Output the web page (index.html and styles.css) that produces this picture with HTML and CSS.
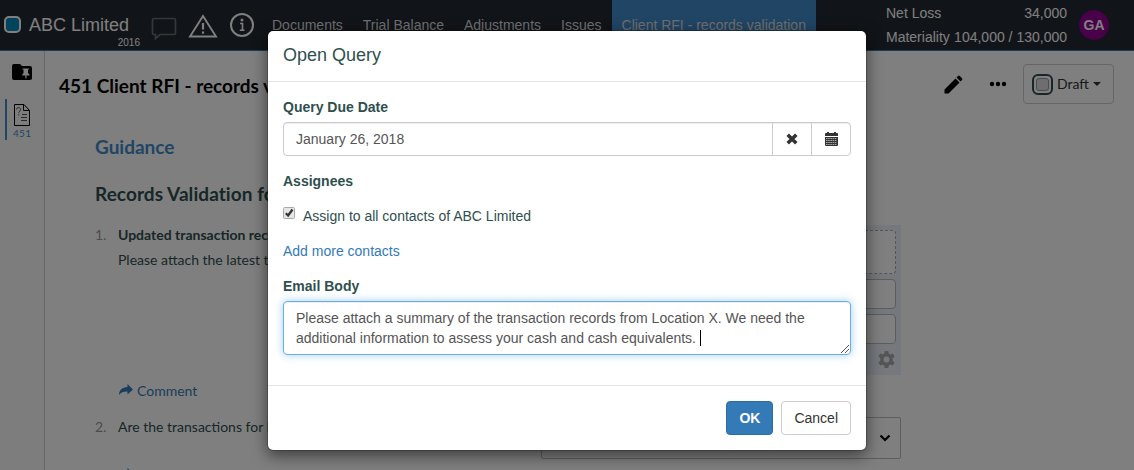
FILE: index.html
```html
<!DOCTYPE html>
<html lang="en">
<head>
<meta charset="utf-8">
<title>Client RFI - records validation</title>
<link rel="stylesheet" href="styles.css">
</head>
<body>
<div class="app">
  <header class="topbar">
    <div class="brand">
      <span class="brand-logo"></span>
      <div class="brand-text"><div class="brand-name">ABC Limited</div><div class="brand-year">2016</div></div>
    </div>
    <div class="top-icons">
      <svg class="ico-chat" width="26" height="24" viewBox="0 0 26 24"><path d="M3 1.500h20a1.500 1.500 0 0 1 1.500 1.500v13a1.500 1.500 0 0 1-1.500 1.500H9L4.500 21.500V17.500H3A1.500 1.500 0 0 1 1.500 16V3A1.500 1.500 0 0 1 3 1.500z" fill="none" stroke="#6b6e72" stroke-width="1.700"/></svg>
      <svg class="ico-warn" width="30" height="24" viewBox="0 0 30 24"><path d="M15 2L28 22.500H2z" fill="none" stroke="#fff" stroke-width="1.900"/><path d="M15 9v6.500M15 17.500v2.200" stroke="#fff" stroke-width="2.200"/></svg>
      <svg class="ico-info" width="26" height="26" viewBox="0 0 26 26"><circle cx="13" cy="13" r="11" fill="none" stroke="#fff" stroke-width="2"/><path d="M11 11.500h2.500V18M10.800 18.200h4.700" fill="none" stroke="#fff" stroke-width="1.600"/><circle cx="13" cy="8" r="1.500" fill="#fff"/></svg>
    </div>
    <nav class="nav">
      <a class="nav-item">Documents</a><a class="nav-item">Trial Balance</a><a class="nav-item">Adjustments</a><a class="nav-item">Issues</a><a class="nav-item active">Client RFI - records validation</a>
    </nav>
    <div class="summary">
      <div class="summary-row"><span>Net Loss</span><span>34,000</span></div>
      <div class="summary-row"><span>Materiality</span><span>104,000 / 130,000</span></div>
    </div>
    <div class="avatar">GA</div>
  </header>
  <div class="body">
    <aside class="sidebar">
      <svg class="ico-folder" width="20" height="16" viewBox="0 0 20 16"><path d="M2 0h6l2 2h8a2 2 0 0 1 2 2v10a2 2 0 0 1-2 2H2a2 2 0 0 1-2-2V2A2 2 0 0 1 2 0z" fill="#000"/><path d="M10.500 4.500h6.500v1h-1v3.500l1.500 1.500v1h-3v2.500l-.6.800-.6-.8v-2.500h-3v-1L11.500 9V5.500h-1z" fill="#fff"/></svg>
      <div class="side-doc">
        <svg width="16" height="22" viewBox="0 0 16 22"><path d="M.5.500h9.500l5.500 6V21.500H.5z" fill="none" stroke="#000"/><path d="M9.500.500v6h6" fill="none" stroke="#000"/><path d="M2.500 5.500Q2.500 3.500 4.500 3.500T6.500 5.500Q6.500 7 4.700 8.500V9.300M4.700 10.300v1.300" fill="none" stroke="#555" stroke-width=".9"/><path d="M8 10.500h5M7 13.500h6M7 16.500h6" stroke="#555" stroke-width="1"/></svg>
        <span>451</span>
      </div>
    </aside>
    <main class="main">
      <div class="title-row">
        <h1 class="title">451 Client RFI - records va</h1>
        <div class="tools">
          <svg width="19" height="19" viewBox="0 0 19 19"><path d="M.5 14.500L11.500 3.500l4 4L4.500 18.500h-4zM12.500 2.500l1.500-1.500a1.300 1.300 0 0 1 1.800 0l2.200 2.200a1.300 1.300 0 0 1 0 1.800L16.500 6.500z" fill="#000"/></svg>
          <svg class="ico-dots" width="18" height="6" viewBox="0 0 18 6"><circle cx="3" cy="3" r="2.200"/><circle cx="9" cy="3" r="2.200"/><circle cx="15" cy="3" r="2.200"/></svg>
          <div class="draft"><span class="draft-box"><i></i></span><span>Draft</span><b class="caret"></b></div>
        </div>
      </div>
      <div class="content">
        <div class="doc">
          <h2 class="guidance">Guidance</h2>
          <h2 class="section">Records Validation for</h2>
          <div class="question"><span class="num">1.</span><div><div class="q-title">Updated transaction rec</div><div class="q-text">Please attach the latest tr</div></div></div>
          <div class="comment"><svg width="14" height="12" viewBox="0 0 14 12"><path d="M8.500 0L14 5.500l-5.500 5V7.500C5 7.300 2.300 8 0 11 0 6 3.500 3.200 8.500 3z"/></svg>Comment</div>
          <div class="question second"><span class="num">2.</span><div class="q-text">Are the transactions for L</div></div>
          <div class="comment next"><svg width="14" height="12" viewBox="0 0 14 12"><path d="M8.500 0L14 5.500l-5.500 5V7.500C5 7.300 2.300 8 0 11 0 6 3.500 3.200 8.500 3z"/></svg></div>
        </div>
        <div class="answers">
          <div class="panel">
            <div class="drop"></div><div class="field"></div><div class="field"></div>
            <svg class="gear" width="17" height="17" viewBox="0 0 24 24"><path fill-rule="evenodd" d="M9.500 0h5l.7 3.400 2.400 1.400 3.300-1.200 2.500 4.300-2.600 2.300v3.600l2.600 2.300-2.500 4.300-3.300-1.200-2.400 1.400-.7 3.400h-5l-.7-3.400-2.400-1.400-3.300 1.200L.6 16.100l2.600-2.300v-3.600L.6 7.900l2.500-4.300 3.300 1.200 2.400-1.400zM12 7.800a4.200 4.200 0 1 0 0 8.400 4.200 4.200 0 0 0 0-8.400z"/></svg>
          </div>
          <div class="select"><svg width="12" height="8" viewBox="0 0 12 8"><path d="M1.500 1.500L6 6l4.500-4.500" fill="none" stroke="#000" stroke-width="2.200"/></svg></div>
        </div>
      </div>
    </main>
  </div>
</div>
<div class="backdrop"></div>
<section class="modal">
  <div class="modal-header">Open Query</div>
  <div class="modal-body">
    <div class="label">Query Due Date</div>
    <div class="date-group">
      <div class="date-value">January 26, 2018</div>
      <div class="addon"><svg class="clear" width="12" height="12" viewBox="0 0 12 12"><path d="M1.700 1.700l8.600 8.600M10.300 1.700l-8.600 8.600" stroke="#333" stroke-width="3.500"/></svg></div>
      <div class="addon"><svg class="calendar" width="13" height="14" viewBox="0 0 13 14"><path d="M1 1h1V0h2v1h5V0h2v1h1q1 0 1 1v2H0V2q0-1 1-1zM0 5h13v8q0 1-1 1H1q-1 0-1-1z" fill="#333"/><path d="M1 6.500h11M1 8.500h11M1 10.500h11M1 12.500h11" stroke="#fff" stroke-width=".6" stroke-dasharray="1.500 .7"/></svg></div>
    </div>
    <div class="label assignees">Assignees</div>
    <div class="check-row"><svg class="check" width="12" height="12" viewBox="0 0 12 12"><rect x=".5" y=".5" width="11" height="11" rx="1" fill="#e6e6e6" stroke="#aaa"/><path d="M2.800 6.300l2.300 2.200L9.500 2.500" fill="none" stroke="#333" stroke-width="2.200"/></svg><span>Assign to all contacts of ABC Limited</span></div>
    <a class="link">Add more contacts</a>
    <div class="label">Email Body</div>
    <div class="textarea">Please attach a summary of the transaction records from Location X. We need the<br>additional information to assess your cash and cash equivalents. <i class="cursor"></i>
      <svg class="grip" width="10" height="10" viewBox="0 0 10 10"><path d="M1 9L9 1M5 9l4-4" stroke="#555" stroke-width="1"/></svg>
    </div>
  </div>
  <div class="modal-footer"><div class="btn primary">OK</div><div class="btn">Cancel</div></div>
</section>
</body>
</html>
```

FILE: styles.css
```css
* { box-sizing: border-box; }
body { margin: 0; width: 1134px; height: 470px; overflow: hidden; position: relative; font: 14px/20px "Liberation Sans", Arial, sans-serif; color: #2f4f4f; }
svg { display: block; flex: none; }
.app { height: 470px; display: flex; flex-direction: column; background: #fff; white-space: nowrap; overflow: hidden; }
.topbar { height: 51px; flex: none; display: flex; background: #222831; border-bottom: 1px solid #337ab7; color: #fff; }
.brand { width: 151px; display: flex; padding: 16px 0 0 4px; }
.brand-logo { width: 17px; height: 17px; flex: none; border: 2px solid #fff; border-radius: 5px; background: #0088bd; }
.brand-text { width: 119px; padding-left: 8px; margin-top: -2px; }
.brand-name { font-size: 18px; line-height: 22px; }
.brand-year { font-size: 10px; line-height: 12px; margin-top: 1px; text-align: right; }
.top-icons { width: 111px; display: flex; align-items: flex-start; }
.ico-chat { margin-top: 17px; }
.ico-warn { margin: 14px 0 0 11px; }
.ico-info { margin: 12px 0 0 11px; }
.nav { display: flex; width: 613px; }
.nav-item { padding: 15px 10px 0; height: 50px; color: #ddd; }
.nav-item.active { background: #428bca; }
.summary { width: 192px; padding: 3px 0 0 11px; }
.summary-row { display: flex; justify-content: space-between; width: 181px; height: 24px; }
.avatar { width: 30px; height: 30px; margin: 10px 0 0 12px; border-radius: 50%; background: #900090; text-align: center; font: bold 14px/30px "Liberation Sans", Arial, sans-serif; }
.body { flex: 1; min-height: 0; display: flex; font-family: Lato, sans-serif; }
.sidebar { width: 45px; flex: none; border-right: 1px solid #ccc; background: #fafafa; }
.ico-folder { margin: 13px 0 0 12px; }
.side-doc { margin: 19px 0 0 5px; height: 41px; border-left: 2px solid #428bca; padding: 5px 0 0 7px; font-size: 10px; line-height: 14px; letter-spacing: .3px; color: #428bca; }
.side-doc span { display: block; margin: 0 0 0 -1px; }
.main { flex: 1; min-width: 0; }
.title-row { display: flex; justify-content: space-between; padding: 13px 20px 0 14px; height: 70px; }
.title { margin: 10px 0 0; font-size: 19px; line-height: 24px; color: #000; }
.tools { display: flex; align-items: center; height: 40px; }
.ico-dots { margin: 0 16px 0 26px; }
.draft { width: 91px; height: 40px; border: 1px solid #ccc; border-radius: 4px; display: flex; align-items: center; padding-left: 8px; font-size: 14px; color: #333; }
.draft-box { width: 21px; height: 21px; border: 2px solid #2f4f4f; border-radius: 6px; padding: 2px; margin-right: 4px; }
.draft-box i { display: block; width: 13px; height: 13px; border: 1px solid #999; border-radius: 3px; background: #ddd; }
.caret { border: 4px solid transparent; border-top-color: #333; border-bottom: 0; margin-left: 4px; }
.content { display: flex; justify-content: space-between; padding: 0 233px 0 50px; }
.guidance { margin: 14px 0 0; font-size: 19px; line-height: 24px; color: #428bca; }
.section { margin: 23px 0 0; font-size: 19px; line-height: 24px; letter-spacing: .07px; }
.question { display: flex; margin-top: 17px; line-height: 24px; }
.num { width: 23px; color: #999; }
.q-title { font-weight: bold; }
.q-text { margin-top: 1px; }
.comment { display: flex; gap: 4px; margin: 109px 0 0 24px; color: #337ab7; line-height: 20px; }
.comment svg { fill: #337ab7; margin-top: 3px; }
.second { margin-top: 14px; }
.second .q-text { margin-top: 0; }
.comment.next { margin-top: 26px; }
.answers { width: 360px; padding-top: 104px; }
.panel { height: 150px; background: #eaf2fd; padding: 5px; }
.drop { height: 44px; border: 1px dashed #aaa; border-radius: 4px; background: #fff; }
.field { height: 30px; border: 1px solid #bbb; border-radius: 4px; background: #fff; margin-top: 5px; }
.gear { fill: #aaa; margin: 7px 1px 0 auto; }
.select { height: 42px; margin-top: 42px; border: 1px solid #bbb; border-radius: 2px; display: flex; justify-content: flex-end; align-items: center; padding-right: 9px; }
.backdrop { position: absolute; inset: 0; background: rgba(0,0,0,.5); }
.modal { position: absolute; left: 267px; top: 30px; width: 600px; height: 421px; border: 1px solid rgba(0,0,0,.2); border-radius: 6px; background: #fff; background-clip: padding-box; box-shadow: 0 5px 15px rgba(0,0,0,.5); white-space: nowrap; }
.modal-header { height: 51px; padding: 12px 15px; font-size: 18px; line-height: 24px; border-bottom: 1px solid #e5e5e5; }
.modal-body { height: 303px; padding: 15px; }
.label { font-weight: bold; height: 25px; }
.date-group { display: flex; height: 34px; border: 1px solid #ccc; border-radius: 4px; color: #555; box-shadow: inset 0 1px 1px rgba(0,0,0,.075); }
.date-value { flex: 1; padding: 6px 12px; }
.addon { width: 39px; border-left: 1px solid #ccc; display: flex; align-items: center; justify-content: center; }
.clear, .calendar { margin-bottom: 1px; }
.label.assignees { margin-top: 15px; height: 35px; }
.check-row { display: flex; gap: 8px; height: 35px; }
.check { margin-top: 1px; }
.link { display: block; height: 35px; color: #337ab7; }
.textarea { position: relative; height: 54px; border: 1px solid #66afe9; border-radius: 4px; padding: 6px 12px; color: #555; box-shadow: inset 0 1px 1px rgba(0,0,0,.075), 0 0 8px rgba(102,175,233,.6); }
.cursor { display: inline-block; width: 1px; height: 16px; background: #000; vertical-align: -3px; }
.grip { position: absolute; right: 0; bottom: 0; }
.modal-footer { border-top: 1px solid #e5e5e5; padding: 15px; display: flex; justify-content: flex-end; gap: 8px; }
.btn { height: 34px; border: 1px solid #ccc; border-radius: 4px; padding: 6px 12px; color: #333; }
.btn.primary { background: #337ab7; border-color: #2e6da4; color: #fff; font-weight: bold; }
```
